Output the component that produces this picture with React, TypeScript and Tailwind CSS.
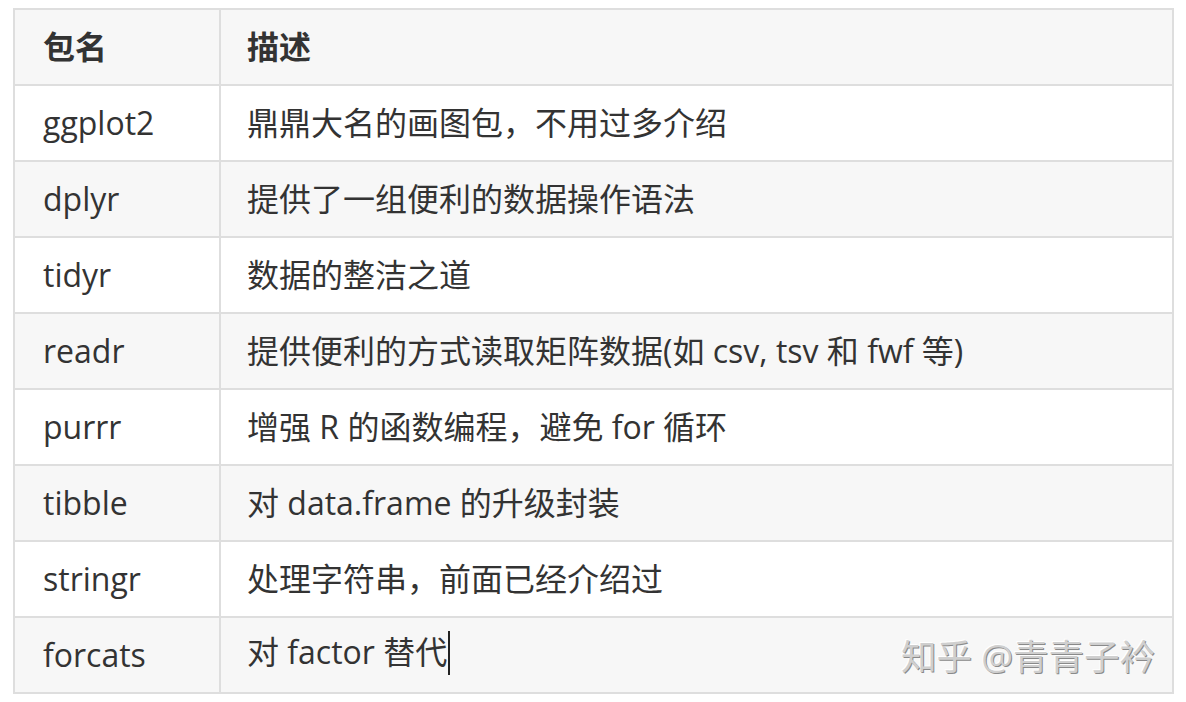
import React from "react";

const rows: [string, string][] = [
  ["ggplot2", "鼎鼎大名的画图包，不用过多介绍"],
  ["dplyr", "提供了一组便利的数据操作语法"],
  ["tidyr", "数据的整洁之道"],
  ["readr", "提供便利的方式读取矩阵数据(如 csv, tsv 和 fwf 等)"],
  ["purrr", "增强 R 的函数编程，避免 for 循环"],
  ["tibble", "对 data.frame 的升级封装"],
  ["stringr", "处理字符串，前面已经介绍过"],
  ["forcats", "对 factor 替代"],
];

export default function App() {
  return (
    <div
      className="relative w-[1186px] h-[702px] bg-white text-[#333] overflow-hidden"
      style={{ fontFamily: '"Open Sans", "Noto Sans CJK SC", sans-serif' }}
    >
      <div className="pt-[8px] pl-[13px]">
        <table className="border-collapse w-[1161px] text-[32px] leading-none">
          <thead>
            <tr className="bg-[#f7f7f7]">
              <th className="border-2 border-[#dedede] h-[76px] w-[206px] pl-[28px] text-left font-bold">包名</th>
              <th className="border-2 border-[#dedede] h-[76px] pl-[26px] text-left font-bold">描述</th>
            </tr>
          </thead>
          <tbody>
            {rows.map(([a, b], i) => (
              <tr key={a} className={i % 2 === 1 ? "bg-[#f7f7f7]" : "bg-white"}>
                <td className="border-2 border-[#dedede] h-[76px] pl-[28px]">{a}</td>
                <td className="border-2 border-[#dedede] h-[76px] pl-[26px]">
                  {b}
                  {i === rows.length - 1 && (
                    <span className="inline-block w-[2px] h-[44px] bg-[#222] align-middle ml-[1px] -mt-[4px]" />
                  )}
                </td>
              </tr>
            ))}
          </tbody>
        </table>
      </div>
      <div
        className="absolute left-[901px] top-[630px] text-[35.5px] text-[#cfcfcf] whitespace-nowrap"
        style={{ textShadow: "1px 1px 0 #8a8a8a, -1px -1px 0 #ffffff" }}
      >
        知乎 @青青子衿
      </div>
    </div>
  );
}
